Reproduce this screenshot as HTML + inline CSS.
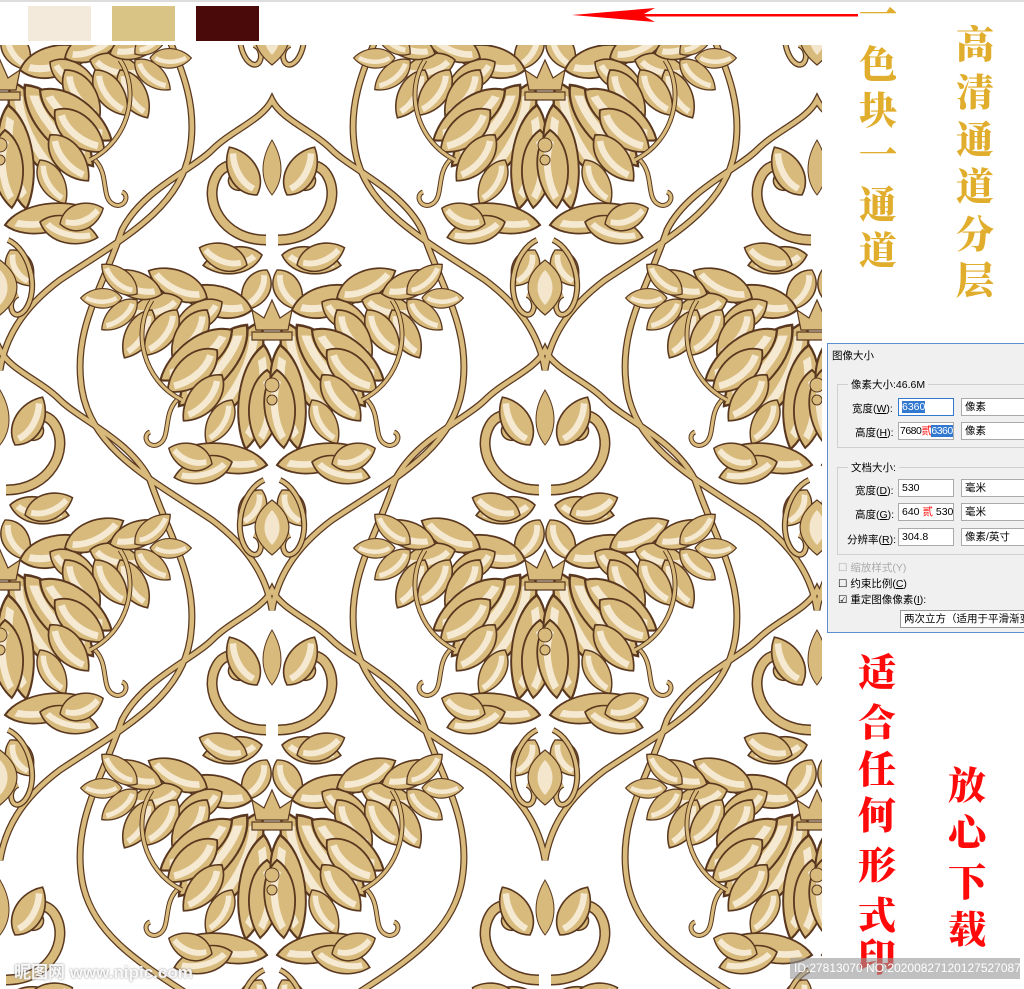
<!DOCTYPE html>
<html style="overflow:hidden"><head><meta charset="utf-8"><style>
html,body{overflow:hidden}
body{margin:0;width:1024px;height:989px;background:#fff;position:relative;overflow:hidden;font-family:"Liberation Sans","Noto Sans CJK SC",sans-serif}
.c{position:absolute;font-family:"Noto Serif CJK SC","WenQuanYi Zen Hei",serif;font-weight:900;font-size:38px;line-height:1;width:44px;text-align:center;transform:translate(-50%,-50%)}
.g{color:#e0ad2c}.r{color:#ff0a0a}
.dlg{position:absolute;left:827px;top:343px;width:197px;height:290px;background:#f0f0f0;border:1px solid #5c8fcf;border-right:none;font-size:10.5px;color:#000;overflow:hidden;box-sizing:border-box}
.dlg .t{position:absolute;white-space:nowrap}
.box{position:absolute;background:#fff;border:1px solid #aaa;height:18px;font-size:10.5px;line-height:16px;padding-left:3px;box-sizing:border-box;white-space:nowrap;overflow:hidden}
.fs{position:absolute;border:1px solid #d0d0d0}
.sel{background:#3078d0;color:#fff}
</style></head><body>
<div style="position:absolute;left:0;top:0;width:1024px;height:2px;background:#ddd"></div>
<div style="position:absolute;left:28px;top:6px;width:63px;height:35px;background:#f3eadb"></div>
<div style="position:absolute;left:112px;top:6px;width:63px;height:35px;background:#d9c485"></div>
<div style="position:absolute;left:196px;top:6px;width:63px;height:35px;background:#4b0a0a"></div>
<svg style="position:absolute;left:0;top:0" width="1024" height="40">
<path d="M572,15 L655,8 L642,15 L655,22 Z" fill="#f00"/>
<rect x="640" y="14" width="218" height="2.5" fill="#f00"/>
</svg>
<svg style="position:absolute;left:0;top:45px" width="822" height="944" viewBox="0 45 822 944">
<defs>
<path id="lf" d="M0,0 C10,-16 34,-14 46,0 C34,13 10,15 0,0Z"/>
<g id="leaf"><use href="#lf" fill="#d8bb7c" stroke="#5a3820" stroke-width="1.3"/><path d="M6,0 C16,-6 30,-5 40,0" fill="none" stroke="#f5e9d2" stroke-width="5"/></g>
<g id="half">
 <g transform="translate(-20,-30)">
  <use href="#leaf" transform="rotate(195) scale(1.6,1.4)"/>
  <use href="#leaf" transform="translate(-30,-8) rotate(150) scale(1.2)"/>
  <use href="#leaf" transform="translate(-45,-12) rotate(205) scale(1.4,1.3)"/>
  <use href="#leaf" transform="translate(-70,-10) rotate(165) scale(1.2)"/>
  <use href="#leaf" transform="translate(-90,-16) rotate(200) scale(1.3,1.2)"/>
  <use href="#leaf" transform="translate(-115,-10) rotate(140) scale(1)"/>
  <use href="#leaf" transform="translate(-115,-16) rotate(220) scale(1)"/>
  <use href="#leaf" transform="translate(-130,-12) rotate(180) scale(0.9)"/>
  <use href="#leaf" transform="translate(-100,0) rotate(120) scale(1.2)"/>
  <use href="#leaf" transform="translate(-75,0) rotate(125) scale(1.2)"/>
  <use href="#leaf" transform="translate(-45,0) rotate(125) scale(1.3)"/>
 </g>
 <use href="#leaf" transform="translate(-12,-18) rotate(115) scale(2.4,1.6)"/>
 <use href="#leaf" transform="translate(-25,-15) rotate(130) scale(2.3,1.6)"/>
 <use href="#leaf" transform="translate(-40,-10) rotate(145) scale(1.9,1.5)"/>
 <use href="#leaf" transform="translate(-55,10) rotate(140) scale(1.4)"/>
 <use href="#leaf" transform="translate(-50,35) rotate(130) scale(1.3)"/>
 <use href="#leaf" transform="translate(-40,60) rotate(120) scale(1.1)"/>
 <use href="#leaf" transform="translate(-8,5) rotate(100) scale(2.3,1.5)"/>
 <use href="#leaf" transform="translate(-5,30) rotate(95) scale(1.7,1.4)"/>
 <use href="#leaf" transform="translate(-5,125) rotate(190) scale(1.9,1.3)"/>
 <use href="#leaf" transform="translate(-40,122) rotate(165) scale(1.3,1.2)"/>
 <use href="#leaf" transform="translate(-60,124) rotate(200) scale(1.0,1.2)"/>
 <use href="#leaf" transform="translate(-10,150) rotate(120) scale(0.9,1.2)"/>
 <path d="M-8,140 C-30,150 -40,190 -25,210 C-12,225 -5,200 -18,195" fill="none" stroke="#5a3820" stroke-width="6"/>
 <path d="M-8,140 C-30,150 -40,190 -25,210 C-12,225 -5,200 -18,195" fill="none" stroke="#d8bb7c" stroke-width="3.5"/>
 <path d="M-90,60 C-130,40 -140,-10 -120,-40" fill="none" stroke="#5a3820" stroke-width="5"/>
 <path d="M-90,60 C-130,40 -140,-10 -120,-40" fill="none" stroke="#d8bb7c" stroke-width="3"/>
 <path d="M-95,60 C-110,75 -100,100 -115,105 C-125,108 -130,95 -122,92" fill="none" stroke="#5a3820" stroke-width="5"/>
 <path d="M-95,60 C-110,75 -100,100 -115,105 C-125,108 -130,95 -122,92" fill="none" stroke="#d8bb7c" stroke-width="3"/>
</g>
<g id="mot">
 <use href="#half"/><use href="#half" transform="scale(-1,1)"/>
 <path d="M0,-40 L8,-22 L20,-30 L16,-10 L-16,-10 L-20,-30 L-8,-22Z M-20,-8 h40 v8 h-40z" fill="#d8bb7c" stroke="#5a3820" stroke-width="1.2"/>
 <circle cx="0" cy="45" r="7" fill="#d8bb7c" stroke="#5a3820"/><circle cx="0" cy="60" r="5" fill="#d8bb7c" stroke="#5a3820"/>
 <path d="M0,160 C20,175 25,195 0,215 C-25,195 -20,175 0,160Z" fill="#d8bb7c" stroke="#5a3820" stroke-width="1.2"/>
 <path d="M0,170 C10,180 10,195 0,205 C-10,195 -10,180 0,170Z" fill="#f3e6cc"/>
</g>
<g id="sh">
 <path d="M-6,40 C-50,40 -70,0 -55,-25 C-45,-42 -20,-35 -25,-20 C-30,-10 -42,-15 -38,-22" fill="none" stroke="#5a3820" stroke-width="11"/>
 <path d="M-6,40 C-50,40 -70,0 -55,-25 C-45,-42 -20,-35 -25,-20 C-30,-10 -42,-15 -38,-22" fill="none" stroke="#d8bb7c" stroke-width="8"/>
 <use href="#leaf" transform="translate(-10,55) rotate(170) scale(1.3,1.2)"/>
 <use href="#leaf" transform="translate(-25,65) rotate(200) scale(1.1,1.2)"/>
 <use href="#leaf" transform="translate(-5,70) rotate(120) scale(1.0,1.2)"/>
 <use href="#leaf" transform="translate(-15,-5) rotate(240) scale(1.2,1.3)"/>
</g>
<g id="scr"><use href="#sh"/><use href="#sh" transform="scale(-1,1)"/>
 <path d="M0,-60 C12,-40 12,-20 0,-5 C-12,-20 -12,-40 0,-60Z" fill="#d8bb7c" stroke="#5a3820"/></g>
<g id="fr" fill="none">
 <path d="M-150,-120 C-170,-60 -200,-20 -190,40 C-180,100 -120,130 -60,170 C-20,200 -5,230 0,260 C5,230 20,200 60,170 C120,130 180,100 190,40 C200,-20 170,-60 150,-120 C130,-160 80,-180 60,-200 C40,-220 10,-230 0,-250 C-10,-230 -40,-220 -60,-200 C-80,-180 -130,-160 -150,-120Z"/>
</g>
</defs>
<g stroke="#5a3820" stroke-width="7">
 <use href="#fr" transform="translate(272,350)"/><use href="#fr" transform="translate(272,840)"/>
 <use href="#fr" transform="translate(545,110)"/><use href="#fr" transform="translate(545,600)"/>
 <use href="#fr" transform="translate(0,110)"/><use href="#fr" transform="translate(0,600)"/>
 <use href="#fr" transform="translate(817,350)"/><use href="#fr" transform="translate(817,840)"/>
</g>
<g stroke="#d8bb7c" stroke-width="4.5">
 <use href="#fr" transform="translate(272,350)"/><use href="#fr" transform="translate(272,840)"/>
 <use href="#fr" transform="translate(545,110)"/><use href="#fr" transform="translate(545,600)"/>
 <use href="#fr" transform="translate(0,110)"/><use href="#fr" transform="translate(0,600)"/>
 <use href="#fr" transform="translate(817,350)"/><use href="#fr" transform="translate(817,840)"/>
</g>
<use href="#scr" transform="translate(272,200)"/><use href="#scr" transform="translate(272,690)"/>
<use href="#scr" transform="translate(545,450)"/><use href="#scr" transform="translate(545,940)"/>
<use href="#scr" transform="translate(0,450)"/><use href="#scr" transform="translate(0,940)"/>
<use href="#scr" transform="translate(817,200)"/><use href="#scr" transform="translate(817,690)"/>
<use href="#scr" transform="translate(545,-40)"/><use href="#scr" transform="translate(0,-40)"/>
<use href="#mot" transform="translate(272,340)"/><use href="#mot" transform="translate(272,830)"/>
<use href="#mot" transform="translate(545,100)"/><use href="#mot" transform="translate(545,590)"/>
<use href="#mot" transform="translate(0,100)"/><use href="#mot" transform="translate(0,590)"/>
<use href="#mot" transform="translate(817,340)"/><use href="#mot" transform="translate(817,830)"/>
<use href="#mot" transform="translate(272,-150)"/><use href="#mot" transform="translate(817,-150)"/>
</svg>

<div class="c g" style="left:878px;top:12px">一</div>
<div class="c g" style="left:878px;top:62px">色</div>
<div class="c g" style="left:878px;top:108px">块</div>
<div class="c g" style="left:878px;top:152px">一</div>
<div class="c g" style="left:878px;top:202px">通</div>
<div class="c g" style="left:878px;top:248px">道</div>
<div class="c g" style="left:975px;top:42px">高</div>
<div class="c g" style="left:975px;top:90px">清</div>
<div class="c g" style="left:975px;top:137px">通</div>
<div class="c g" style="left:975px;top:184px">道</div>
<div class="c g" style="left:975px;top:232px">分</div>
<div class="c g" style="left:975px;top:278px">层</div>

<div class="c r" style="left:877px;top:670px">适</div>
<div class="c r" style="left:877px;top:720px">合</div>
<div class="c r" style="left:877px;top:767px">任</div>
<div class="c r" style="left:877px;top:813px">何</div>
<div class="c r" style="left:877px;top:863px">形</div>
<div class="c r" style="left:877px;top:913px">式</div>
<div class="c r" style="left:877px;top:955px">印</div>
<div class="c r" style="left:967px;top:783px">放</div>
<div class="c r" style="left:967px;top:830px">心</div>
<div class="c r" style="left:967px;top:880px">下</div>
<div class="c r" style="left:967px;top:927px">载</div>

<div class="dlg">
 <div class="t" style="left:4px;top:4px">图像大小</div>
 <div class="fs" style="left:9px;top:40px;width:200px;height:62px"></div>
 <div class="t" style="left:20px;top:33px;background:#f0f0f0;padding:0 3px">像素大小:46.6M</div>
 <div class="t" style="left:24px;top:57px">宽度(<u>W</u>):</div>
 <div class="box" style="left:70px;top:54px;width:56px;border-color:#3078d0"><span class="sel">6360</span></div>
 <div class="box" style="left:133px;top:54px;width:70px">像素</div>
 <div class="t" style="left:27px;top:81px">高度(<u>H</u>):</div>
 <div class="box" style="left:70px;top:78px;width:56px;padding-left:1px;letter-spacing:-0.5px">7680<span style="color:red">贰</span><span class="sel">6360</span></div>
 <div class="box" style="left:133px;top:78px;width:70px">像素</div>
 <div class="fs" style="left:9px;top:123px;width:200px;height:86px"></div>
 <div class="t" style="left:20px;top:116px;background:#f0f0f0;padding:0 3px">文档大小:</div>
 <div class="t" style="left:27px;top:139px">宽度(<u>D</u>):</div>
 <div class="box" style="left:70px;top:135px;width:56px">530</div>
 <div class="box" style="left:133px;top:135px;width:70px">毫米</div>
 <div class="t" style="left:27px;top:163px">高度(<u>G</u>):</div>
 <div class="box" style="left:70px;top:159px;width:56px">640 <span style="color:red">贰</span> 530</div>
 <div class="box" style="left:133px;top:159px;width:70px">毫米</div>
 <div class="t" style="left:19px;top:188px">分辨率(<u>R</u>):</div>
 <div class="box" style="left:70px;top:184px;width:56px">304.8</div>
 <div class="box" style="left:133px;top:184px;width:70px">像素/英寸</div>
 <div class="t" style="left:10px;top:216px;color:#aaa">☐ 缩放样式(Y)</div>
 <div class="t" style="left:10px;top:232px">☐ 约束比例(<u>C</u>)</div>
 <div class="t" style="left:10px;top:248px">☑ 重定图像像素(<u>I</u>):</div>
 <div class="box" style="left:72px;top:266px;width:130px;border-color:#999">两次立方（适用于平滑渐变</div>
</div>

<div style="position:absolute;left:790px;top:958px;width:230px;height:21px;background:rgba(150,150,150,0.6);color:#fff;font-size:12px;line-height:21px;padding-left:4px;white-space:nowrap;overflow:hidden;box-sizing:border-box">ID:27813070 NO:20200827120127527087</div>
<div style="position:absolute;left:14px;top:958px;color:rgba(255,255,255,0.9);font-size:17px;font-weight:bold;text-shadow:0 0 2px #888;white-space:nowrap">昵图网 www.nipic.com</div>
</body></html>
